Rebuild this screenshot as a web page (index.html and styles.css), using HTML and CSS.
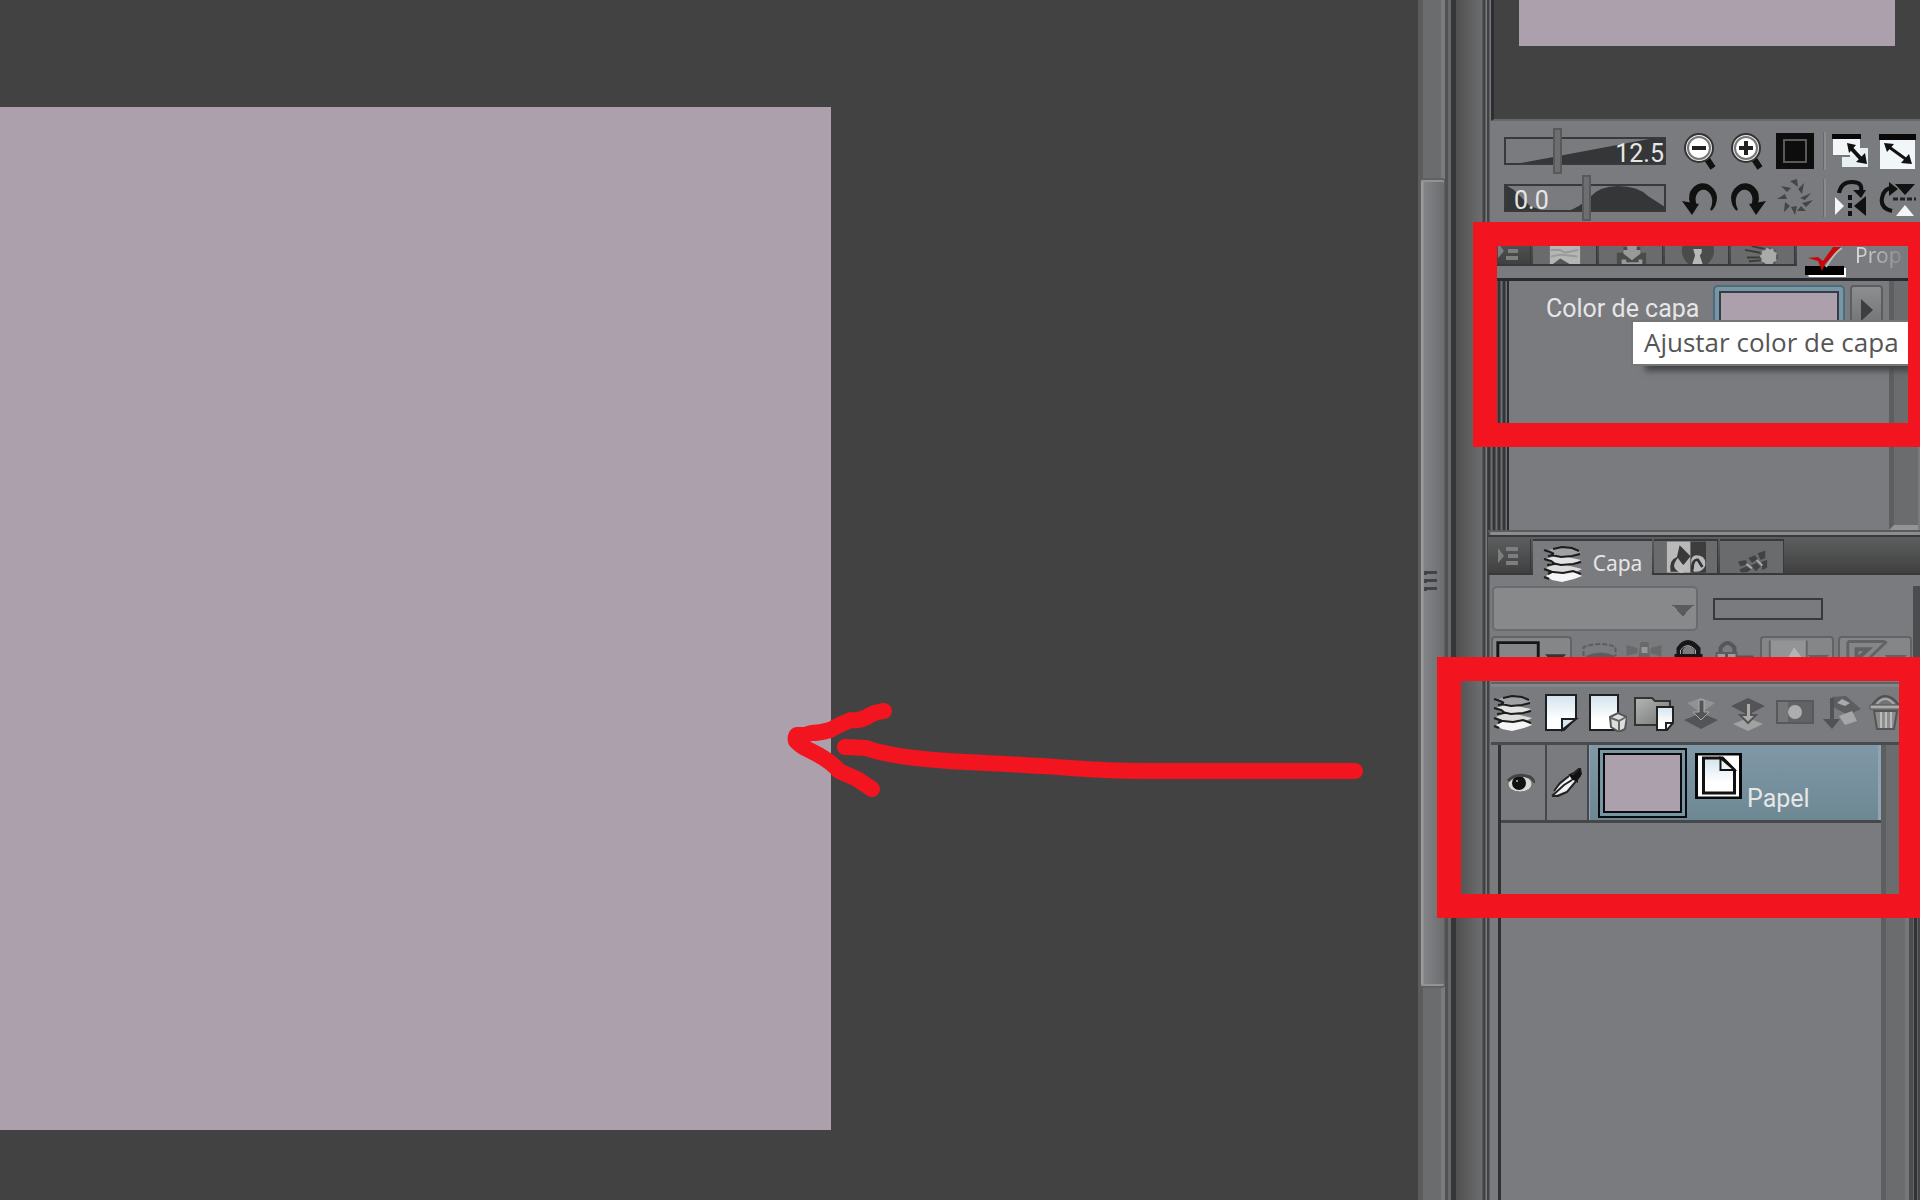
FILE: index.html
```html
<!DOCTYPE html>
<html lang="es">
<head>
<meta charset="utf-8">
<title>Color de capa</title>
<link rel="stylesheet" href="styles.css">
</head>
<body>
<svg class="defs" aria-hidden="true">
  <defs>
    <linearGradient id="sheet" x1="0" y1="0" x2="0" y2="1"><stop offset="0" stop-color="#d3e4ee"/><stop offset=".7" stop-color="#fff"/></linearGradient>
    <linearGradient id="folder" x1="0" y1="0" x2="1" y2="1"><stop offset="0" stop-color="#b4b6b5"/><stop offset="1" stop-color="#747674"/></linearGradient>
    <symbol id="layers" viewBox="0 0 40 38">
      <path d="M3 31l10-5 15-1 11 6-8 3-12 3-10-2z" fill="#f6f6f6"/>
      <path d="M3 23l12-5 24 6-8 4-12 1-10-3z" fill="#dcdcdc"/>
      <path d="M3 14l12-4 23 5-8 4-12 1-10-3z" fill="#e2e2e2"/>
      <path d="M2 6l13-4 12 1 11 4-8 4-12 1-10-3z" fill="#a0a1a2"/>
      <path d="M10 4l9-2 10 1 7 3M1 5l6 2 4 2M8 10l10 2 11-1 8-2M1 14l7 2 3 2M9 18l9 2 12-1 8-2M1 24l8 3-4 2M10 27l10 1 10-2 8 3M1 32l5 2M4 20l7-1M5 11l6-1" fill="none" stroke="#1c1c1c" stroke-width="2"/>
    </symbol>
    <symbol id="menu" viewBox="0 0 24 22"><path d="M1 3v15l6-7z"/><path d="M9 2h12v4H9zM11 9h10v4H11zM9 16h12v4H9z"/></symbol>
    <symbol id="turn" viewBox="0 0 38 38"><path d="M9 24C5 11 16 3 25 6q8 4 9 12 0 8-5 13 4-8 1-15-5-9-13-5-6 5-4 13z" fill="#111" stroke="#111" stroke-width="2"/><path d="M0 22l17 3-7 11z" fill="#111"/></symbol>
  </defs>
</svg>

<main class="app">
  <section class="workspace">
    <div class="paper"></div>
    <svg class="arrow" viewBox="0 0 600 120" aria-hidden="true">
      <path d="M575 71H366Q330 71 290 68T168 61Q110 57 86 48L65 47M104 11Q94 12 87 17Q80 21 71 20Q60 24 50 30Q40 33 31 33L25 35H17Q15 37 16 41Q22 47 29 50Q50 60 59 71L77 79 92 89"/>
    </svg>
  </section>

  <div class="scrollbar"><div class="thumb"><i></i><i></i><i></i></div></div>
  <div class="gutter"></div>

  <aside class="dock">
    <section class="navigator"><div class="preview"></div></section>

    <section class="controls">
      <div class="control-row">
        <label class="slider">
          <svg viewBox="0 0 162 28" aria-hidden="true"><path class="fill" d="M12 27L145 2h17v26H12z"/><rect x="1" y="1" width="160" height="26"/></svg>
          <span class="value right">12.5</span>
          <input type="range" min="0" max="100" value="32" aria-label="Zoom">
        </label>
        <div class="tools">
          <button aria-label="Alejar"><svg viewBox="0 0 38 38"><path d="M23 24l8 12" stroke="#111" stroke-width="6"/><circle cx="17" cy="16" r="15" fill="#333"/><circle cx="17" cy="16" r="12" fill="#fff" stroke="#eee" stroke-width="2"/><circle cx="17" cy="16" r="11" fill="none" stroke="#777" stroke-width="2"/><path d="M10 16h14" stroke="#222" stroke-width="4"/></svg></button>
          <button aria-label="Acercar"><svg viewBox="0 0 38 38"><path d="M23 24l8 12" stroke="#111" stroke-width="6"/><circle cx="17" cy="16" r="15" fill="#333"/><circle cx="17" cy="16" r="12" fill="#fff" stroke="#eee" stroke-width="2"/><circle cx="17" cy="16" r="11" fill="none" stroke="#777" stroke-width="2"/><path d="M10 16h14M17 9v14" stroke="#222" stroke-width="4"/></svg></button>
          <button aria-label="Ajustar"><svg viewBox="0 0 38 38"><path d="M0 1h38v36H0z" fill="#0d0d0d"/><path d="M8 8h22v22H8z" fill="none" stroke="#5a5a5a" stroke-width="2"/></svg></button>
          <span class="divider"></span>
          <button aria-label="Ajustar a ventana"><svg viewBox="0 0 38 38"><path d="M10 16h26v19H10z" fill="#e6eff1"/><path d="M1 4h27v20H1z" fill="#f2f6f7"/><path d="M0 2h29v5H0z" fill="#080808"/><path d="M1 24h17" stroke="#777" stroke-width="2"/><path d="M18 15l13 14" stroke="#111" stroke-width="4"/><path d="M15 11l9 2-7 8zM35 32l-2-11-9 9z" fill="#111"/></svg></button>
          <button aria-label="Ver completo"><svg viewBox="0 0 38 38"><path d="M1 3h35v34H1z" fill="#f1f7f8"/><path d="M0 2h37v6H0z" fill="#080808"/><path d="M10 15l18 13" stroke="#111" stroke-width="3"/><path d="M5 11l10 1-7 8zM33 32l-3-10-8 9z" fill="#111"/></svg></button>
        </div>
      </div>
      <div class="control-row">
        <label class="slider">
          <svg viewBox="0 0 162 28" aria-hidden="true"><path class="fill" d="M0 0l10 6 16 16 14 5H0zM64 27q12-4 22-14 10-11 28-11 20 0 30 10l17 11v4z"/><rect x="1" y="1" width="160" height="26"/></svg>
          <span class="value">0.0</span>
          <input type="range" min="0" max="100" value="51" aria-label="Rotación">
        </label>
        <div class="tools">
          <button aria-label="Girar a la izquierda"><svg><use href="#turn"/></svg></button>
          <button aria-label="Girar a la derecha"><svg viewBox="0 0 38 38"><use href="#turn" transform="matrix(-1 0 0 1 37 0)" width="38" height="38"/></svg></button>
          <button aria-label="Restablecer giro"><svg viewBox="0 0 38 38"><g fill="#444545"><path d="M14 2l7-2 1 8zM28 4l-2 11-4-5zM35 14l-6 7-5-2zM37 21l-7 7-4-4zM30 32l-9 0 4-5zM19 36l-4-8 6-1zM8 33l1-10 5 4zM1 20l8-5 2 5zM5 7l10 2-4 4z"/></g></svg></button>
          <span class="divider"></span>
          <button aria-label="Voltear horizontal"><svg viewBox="0 0 38 38"><path d="M7 14Q9 3 20 3t9 9" fill="none" stroke="#111" stroke-width="4"/><path d="M21 11h13l-5 8z" fill="#111"/><path d="M18 16v21" stroke="#111" stroke-width="4" stroke-dasharray="5 3"/><path d="M34 17v20L22 27z" fill="#111"/><path d="M3 18v18l9-9z" fill="#f1f7f7"/></svg></button>
          <button aria-label="Voltear vertical"><svg viewBox="0 0 38 38"><path d="M13 32Q1 29 3 19T13 9" fill="none" stroke="#111" stroke-width="4"/><path d="M10 3l9 7-9 7zM16 5h20L26 16z" fill="#111"/><path d="M14 20h23" stroke="#222" stroke-width="3" stroke-dasharray="5 2"/><path d="M26 26l9 11H17z" fill="#f1f7f7"/></svg></button>
        </div>
      </div>
    </section>

    <section class="property">
      <nav class="tabs">
        <button class="tab menu low" aria-label="Menú"><svg><use href="#menu"/></svg></button>
        <button class="tab" aria-label="Navegador"><svg viewBox="0 0 40 36"><path d="M4 0h32v34H4z" fill="#b5b5b5"/><path d="M5 19h10l5 3 14-3M5 26l10-2 18 2" stroke="#999" fill="none" stroke-width="2"/><path d="M7 34l8-6 10 6z" fill="#555"/></svg></button>
        <button class="tab" aria-label="Material"><svg viewBox="0 0 40 36"><path d="M5 22h7v-6h18v6h6v13H5z" fill="#4b4b4b"/><path d="M16 8h10v11h4v4l-9 7-9-7v-4h4z" fill="#999"/><path d="M10 29h5v3h13v-3h4v6H10z" fill="#999"/></svg></button>
        <button class="tab" aria-label="Información"><svg viewBox="0 0 40 36"><circle cx="21" cy="20" r="17" fill="#4b4b4c"/><path d="M16 18h9v4l-2 3 3 9H15l3-9z" fill="#b8b8b8"/></svg></button>
        <button class="tab" aria-label="Acciones"><svg viewBox="0 0 40 36"><path d="M1 19l16 3M3 27h15M8 15l14 3M5 31l13-1" stroke="#3c3c3c" stroke-width="2"/><circle cx="26" cy="26" r="9" fill="#aaa" stroke="#555" stroke-width="2" stroke-dasharray="3 3"/></svg></button>
        <button class="tab active prop"><svg viewBox="0 0 44 50"><path d="M0 36h41v9H4z" fill="#fff"/><path d="M0 34h39v9H0z"/><path d="M3 26l10-1 5 4 10-14h8L20 32l-3 7-4-10z" fill="#c80808"/><path d="M21 35Q30 20 37 16" fill="none" stroke="#b9b9b9" stroke-width="2"/></svg><span>Prop</span></button>
      </nav>
      <div class="property-body">
        <div class="grip"></div>
        <div class="property-form">
          <span class="property-label">Color de capa</span>
          <button class="swatch" aria-label="Color de capa"><i></i></button>
          <button class="more" aria-label="Más"><svg viewBox="0 0 29 40"><path d="M9 11v22l12-11z" fill="#3d3e3f"/></svg></button>
        </div>
        <div class="side-scroll"></div>
      </div>
      <div class="tooltip" role="tooltip">Ajustar color de capa</div>
      <div class="mark mark-property"></div>
    </section>

    <section class="layers">
      <nav class="tabs">
        <button class="tab menu" aria-label="Menú"><svg><use href="#menu"/></svg></button>
        <button class="tab active capa"><svg><use href="#layers"/></svg><span>Capa</span></button>
        <button class="tab" aria-label="Historial"><svg viewBox="0 0 44 36"><path d="M1 0h26v34H1z" fill="#b9b9b9"/><path d="M27 0h17v34H27z" fill="#3d3d3d"/><path d="M15 4l12 12-8 10-6-8q-9 11 2 15H5Q3 20 12 17z" fill="#393939"/><path d="M29 30q-4-14 4-15 12 0 10 12-4 7-12 6zM13 23q-5 10 5 12l7-7z" fill="#bbb"/><path d="M29 31q0-12 6-11l5 8" fill="none" stroke="#333" stroke-width="3"/></svg></button>
        <button class="tab" aria-label="Animación"><svg viewBox="0 0 40 36"><g fill="#424242"><path d="M5 22l8-2 3 4-8 3zM16 18l7-3 3 4-6 4zM26 13l8-3v8l-5 2zM7 30l7-3 5 3-4 3H8zM19 26l6-3 4 4-5 5zM30 22l6-2v8l-5 3z"/></g><path d="M14 24l6 5M25 20l6 6" stroke="#aaa" stroke-width="2"/></svg></button>
      </nav>

      <div class="blend-row">
        <select class="blend" aria-label="Modo de combinación" disabled><option></option></select>
        <div class="opacity"></div>
      </div>

      <div class="option-row">
        <button class="box palette" aria-label="Color de paleta"><svg viewBox="0 0 80 42"><path d="M5 4h42v34H5z" fill="none" stroke="#161616" stroke-width="3"/><path d="M54 16h22l-11 12z" fill="#333"/></svg></button>
        <button aria-label="Recortar"><svg viewBox="0 0 40 42"><path d="M3 20v-9q16-6 32 0v9" fill="none" stroke="#5c5d5e" stroke-width="2" stroke-dasharray="5 2"/><path d="M5 20q15-7 30 0l-7 8H12z" fill="#5c5d5e"/></svg></button>
        <button aria-label="Referencia"><svg viewBox="0 0 40 42"><path d="M15 6h8l2 22H12zM1 9l11 3v5L1 20zM36 9l-11 3v5l11 4z" fill="#68696a"/><path d="M16 11h6v6h-6z" fill="#989898"/></svg></button>
        <button aria-label="Bloquear"><svg viewBox="0 0 40 42"><path d="M9 20v-7q8-12 18 0v7" fill="none" stroke="#171717" stroke-width="6"/><path d="M10 19v-5q7-9 15 0v5" fill="none" stroke="#aaa" stroke-width="1"/><path d="M4 18h28v20H4z" fill="#161616"/></svg></button>
        <button aria-label="Bloquear píxeles"><svg viewBox="0 0 40 42"><path d="M5 17v-5q7-10 14 0v5" fill="none" stroke="#565758" stroke-width="4"/><path d="M1 17h20v20H1z" fill="#9b9c9d" stroke="#5b5c5d" stroke-width="2"/><path d="M11 18v8M21 21h17" stroke="#555" stroke-width="3"/></svg></button>
        <button class="box" aria-label="Máscara"><svg viewBox="0 0 72 42"><path d="M8 2h38v38H8z" fill="#939495"/><path d="M13 28l5-9 8 2 7-12 9 12v18H13z" fill="#b3b4b4"/><path d="M8 2v38M46 2v38" stroke="#666" stroke-width="2"/><path d="M47 17h22l-11 11z" fill="#606162"/></svg></button>
        <button class="box" aria-label="Regla"><svg viewBox="0 0 72 42"><path d="M8 3h38M8 3v35M48 3L22 28" fill="none" stroke="#626364" stroke-width="3"/><path d="M17 22v-11h12z" fill="none" stroke="#606162" stroke-width="4"/><path d="M46 17h23l-12 11z" fill="#606162"/></svg></button>
      </div>

      <div class="toolbar">
        <button aria-label="Capas"><svg><use href="#layers"/></svg></button>
        <button aria-label="Nueva capa"><svg viewBox="0 0 40 38"><path d="M6 1h30v23L24 36H6z" fill="url(#sheet)" stroke="#1d2022" stroke-width="2"/><path d="M22 36V25h14z" fill="#d8e7ed" stroke="#1d2022" stroke-width="2"/></svg></button>
        <button aria-label="Nueva capa 3D"><svg viewBox="0 0 40 38"><path d="M3 1h28v35H3z" fill="url(#sheet)" stroke="#1d2022" stroke-width="2"/><path d="M23 23l8-4 9 4-2 12-6 3-8-5z" fill="#ddd" stroke="#555" stroke-width="2"/><path d="M24 24l8 3v10M32 27l7-4" fill="none" stroke="#666" stroke-width="2"/></svg></button>
        <button aria-label="Nueva carpeta"><svg viewBox="0 0 40 38"><path d="M1 4h17l3 3h15v24H1z" fill="url(#folder)" stroke="#333" stroke-width="2"/><path d="M23 13h16v16l-6 7H23z" fill="url(#sheet)" stroke="#222" stroke-width="2"/><path d="M32 35v-6h7" fill="none" stroke="#222" stroke-width="2"/></svg></button>
        <button aria-label="Transferir"><svg viewBox="0 0 40 38"><path d="M3 26l17-7 17 7-17 9z" fill="#535455"/><path d="M6 9l14-5 14 5-14 10z" fill="#919293"/><path d="M18 6h5v12h5l-8 8-8-8h6z" fill="#545556" stroke="#aaa" stroke-width="1"/></svg></button>
        <button aria-label="Combinar"><svg viewBox="0 0 40 38"><path d="M3 12l17-8 17 8-17 9z" fill="#535455"/><path d="M5 30l15-6 15 6-15 7z" fill="#a0a1a1"/><path d="M18 9h5v12h5l-8 8-8-8h6z" fill="#aaa" stroke="#555" stroke-width="2"/></svg></button>
        <button aria-label="Crear máscara"><svg viewBox="0 0 40 38"><path d="M2 7h36v22H2z" fill="#626364" stroke="#57595a" stroke-width="2"/><path d="M3 8h10v20H3z" fill="#757677"/><circle cx="20" cy="18" r="7" fill="#adadad"/></svg></button>
        <button aria-label="Aplicar máscara"><svg viewBox="0 0 40 38"><path d="M10 3l14-1 15 13-13 6-15-8z" fill="#5d5e5f"/><path d="M17 22l13-5 5 10-12 4z" fill="#a5a6a6"/><path d="M20 5l8 4-5 3-8-3z" fill="#a9aaaa"/><path d="M8 4h4v21h6l-8 10-9-10h7z" fill="#515253"/></svg></button>
        <button aria-label="Eliminar"><svg viewBox="0 0 40 38"><path d="M3 11Q16-7 30 11" fill="#727374" stroke="#4e4f50" stroke-width="2"/><path d="M8 10Q16 0 25 10" fill="none" stroke="#aaa" stroke-width="2"/><path d="M1 11h31v4H1z" fill="#aaa" stroke="#555"/><path d="M5 17h23l-3 18H8z" fill="#8b8c8c" stroke="#555" stroke-width="2"/><path d="M12 18v16M17 18v16M22 18v16" stroke="#bbb" stroke-width="2"/></svg></button>
      </div>

      <div class="layer-area">
        <ul class="layer-list">
          <li class="layer">
            <button class="cell eye" aria-label="Visible"><svg viewBox="0 0 28 22"><ellipse cx="13" cy="12" rx="12" ry="8" fill="#d9d9d9" stroke="#777"/><circle cx="12" cy="11" r="7" fill="#111"/><path d="M1 9Q9 0 23 5q5 4 4 6" fill="none" stroke="#444" stroke-width="3"/><circle cx="10" cy="9" r="1" fill="#bbb"/></svg></button>
            <button class="cell pen" aria-label="Editar"><svg viewBox="0 0 32 30"><path d="M2 28q3-9 8-12l10-9 5 6-9 10z" fill="#f2f2f2"/><path d="M1 28h6l9-4 10-12M1 28l12-11 8-5M3 23l6-8 9-7M19 7l4-2 6-5 1 6-4 4 0 3z" fill="none" stroke="#222" stroke-width="2"/><path d="M18 6l4 1 7-6 1 7-4 5-5-1z" fill="#111"/></svg></button>
            <div class="selected">
              <span class="thumbnail"><i></i></span>
              <svg class="paper-icon" viewBox="0 0 46 46"><path d="M1 1h44v44H1z" fill="#fff" stroke="#080808" stroke-width="3"/><path d="M8 5h19l12 12v23H8z" fill="url(#sheet)" stroke="#111" stroke-width="3"/><path d="M25 5v12h14z" fill="#eef4f5" stroke="#111" stroke-width="2"/></svg>
              <span class="name">Papel</span>
            </div>
          </li>
        </ul>
        <div class="list-scroll"></div>
      </div>
      <div class="mark mark-layer"></div>
    </section>
  </aside>
</main>
</body>
</html>
```
FILE: styles.css
```css
:root {
  --panel: #7a7b7f;
  --dark: #424242;
  --line: #38393b;
  --lilac: #aca0ad;
  --red: #f2141e;
  --text: #e6e6e6;
}
* { box-sizing: border-box; }
body {
  margin: 0;
  overflow: hidden;
  background: var(--dark);
  color: var(--text);
  font-family: Roboto, sans-serif;
}
button {
  margin: 0;
  padding: 0;
  border: 0;
  background: none;
  color: inherit;
  font: inherit;
}
svg { display: block; }
.defs { position: absolute; width: 0; height: 0; }

.app {
  display: grid;
  grid-template-columns: minmax(0, 1fr) 27px 46px 429px;
  min-height: 100vh;
}

/* Canvas */
.workspace { position: relative; display: flex; padding: 107px 0 70px; }
.paper { width: 58.6%; background: var(--lilac); }
.arrow {
  position: absolute;
  top: 700px;
  left: 780px;
  width: 600px;
  height: 120px;
  fill: none;
  stroke: var(--red);
  stroke-width: 16;
  stroke-linecap: round;
  stroke-linejoin: round;
}

/* Canvas scrollbar and dock divider */
.scrollbar {
  padding: 178px 0 0 2px;
  background: linear-gradient(90deg, #5b5c5e 5px, #6b6c6e 5px 23px, #7b7c7e 23px);
}
.thumb {
  display: flex;
  flex-direction: column;
  gap: 4px;
  width: 25px;
  height: 810px;
  padding: 391px 0 0 3px;
  border: 1px solid #606163;
  border-width: 2px 1px;
  border-radius: 3px;
  background: linear-gradient(90deg, #9a9b9d 2px, #828386 3px, #6c6d6f);
  box-shadow: inset 0 2px #929395, inset 0 -2px #929395;
}
.thumb i { width: 13px; height: 4px; border-top: 3px solid #424346; border-left: 3px solid #424346; }
.gutter {
  background: linear-gradient(90deg, #505254 3px, #68696b 3px 6px, #363636 6px 11px, #505050 11px, #6c6d6f 37px, #424345 38px 40px, #7a7b7e 41px 42px, #424345 42px 44px, #7a7b7e 45px);
}

/* Dock */
.dock { display: flex; flex-direction: column; background: var(--panel); }
.navigator {
  height: 121px;
  padding: 0 25px;
  border-left: 3px solid #2d2e30;
  border-bottom: 2px solid #67686a;
  background: var(--dark);
}
.preview { height: 46px; background: var(--lilac); }

.controls { display: grid; gap: 1px; padding: 7px 0 5px 13px; }
.control-row { display: flex; align-items: center; gap: 16px; height: 46px; }
.slider { display: grid; width: 162px; align-items: center; }
.slider > * { grid-area: 1 / 1; }
.slider svg { width: 162px; height: 28px; }
.slider rect { fill: none; stroke: var(--line); stroke-width: 2; }
.fill { fill: #353638; }
.slider input {
  width: 162px;
  height: 46px;
  margin: 0;
  appearance: none;
  background: none;
}
.slider input::-webkit-slider-thumb {
  width: 9px;
  height: 46px;
  appearance: none;
  border: 2px solid #58595b;
  background: #6d6e70;
}
.value { padding: 6px 2px 0 10px; font-size: 25px; line-height: 28px; }
.right { text-align: right; }
.tools { display: flex; gap: 9px; }
.tools button, .tools svg { width: 38px; height: 38px; }
.divider { width: 3px; margin-right: -3px; background: #8a8b8d; border-left: 1px solid #69696b; }

/* Tabs */
.tabs {
  display: flex;
  gap: 2px;
  height: 40px;
  margin-left: -3px;
  border: 2px solid var(--line);
  border-width: 2px 0;
  background: linear-gradient(#5d5e5f, #404040);
}
.tab {
  display: flex;
  justify-content: center;
  width: 64px;
  height: 36px;
  margin-top: 2px;
  border-top: 2px solid var(--line);
  border-right: 1px solid #38393b;
  background: #6a6b6d;
  overflow: hidden;
}
.tab:not(.active) { height: 34px; }
.tab svg { flex: none; width: 40px; height: 34px; }
.tab.menu { width: 43px; padding-top: 6px; border-top: 0; background: none; fill: #7d7e80; }
.tab.menu svg { width: 24px; height: 22px; }
.tab.low { padding-top: 10px; }
.active {
  gap: 10px;
  height: 48px;
  border-right: 0;
  background: var(--panel);
  font: 21px/26px "Noto Sans", sans-serif;
}
.tab.capa { width: 119px; padding-top: 4px; }
.capa span { padding-top: 5px; }
.tab.capa svg { height: 38px; }
.tab.prop { flex: 1; justify-content: flex-start; gap: 6px; padding-left: 8px; }
.tab.prop svg { width: 44px; height: 50px; }
.prop span { padding-top: 10px; background: linear-gradient(90deg, #ddd, #8a8b8e); background-clip: text; color: transparent; }

/* Layer property */
.property { position: relative; height: 309px; border-bottom: 3px solid #8c8d90; }
.property-body {
  display: flex;
  height: 254px;
  margin-top: 12px;
  margin-left: -3px;
  border-top: 3px solid #292a2d;
  border-bottom: 2px solid #5a5b5d;
}
.grip { flex: none; width: 21px; background: repeating-linear-gradient(90deg, #343537 0 2px, #6e6f72 3px 4px, #343537 5px); border-right: 2px solid #2b2c2e; }
.property-form { display: flex; flex: 1; gap: 5px; min-width: 0; padding: 4px 6px 0 37px; }
.property-label { flex: 1; padding-top: 8px; font-size: 25px; line-height: 32px; white-space: nowrap; }
.swatch {
  flex: none;
  width: 132px;
  height: 46px;
  padding: 4px;
  border: 2px solid #4d6b7a;
  border-radius: 5px;
  background: #7896a6;
}
.swatch i { display: block; height: 34px; border: 2px solid #343c45; background: var(--lilac); }
.more { flex: none; width: 33px; height: 46px; border: 2px solid #5c5d5f; border-radius: 4px; background: linear-gradient(#8d8e90, #707173); }
.side-scroll { flex: none; width: 29px; margin-right: 2px; border-left: 5px solid #5d5e60; border-bottom: 5px solid #939496; background: #6b6c6e; }
.tooltip {
  position: absolute;
  top: 94px;
  right: 0;
  width: 289px;
  height: 46px;
  padding-left: 11px;
  border: 2px solid #767676;
  border-right: 0;
  background: #fff;
  box-shadow: 12px 7px 6px -2px #444547;
  color: #555;
  font: 26px/40px "Open Sans", sans-serif;
  white-space: nowrap;
}

/* Red marks drawn over the panels */
.mark { position: absolute; right: 0; border: 24px solid var(--red); pointer-events: none; }
.mark-property { top: -4px; left: -18px; height: 225px; border-right-width: 12px; }
.mark-layer { top: 122px; left: -54px; height: 261px; border-right-width: 21px; }

/* Layers */
.layers { position: relative; display: flex; flex: 1; flex-direction: column; }
.blend-row { display: flex; align-items: center; gap: 15px; margin-top: 11px; padding-left: 1px; border-right: 7px solid #4b4c4e; }
.blend {
  width: 206px;
  height: 45px;
  appearance: none;
  border: 2px solid #6a6b6d;
  border-radius: 5px;
  background: linear-gradient(to bottom left, transparent 50%, #5a5b5d 50%) 178px 17px / 11px 11px no-repeat, #88898b;
  background: linear-gradient(to bottom left, #5a5b5d 50%, transparent 50%) 178px 17px / 11px 11px no-repeat, linear-gradient(to bottom right, #5a5b5d 50%, transparent 50%) 189px 17px / 11px 11px no-repeat, #88898b;
  opacity: 1;
}
.opacity { width: 110px; height: 22px; border: 2px solid var(--line); }
.option-row { display: flex; gap: 4px; height: 51px; padding-top: 5px; border-right: 7px solid #4b4c4e; }
.option-row button { width: 41px; height: 42px; }
.option-row .box { width: 74px; border: 2px solid #626365; border-radius: 4px; background: #858688; }
.option-row .palette { width: 81px; margin-right: 4px; }
.option-row svg { width: 100%; height: 42px; }
.toolbar {
  display: flex;
  gap: 7px;
  height: 63px;
  padding: 12px 0 0 2px;
  border-bottom: 3px solid #4a4b4d;
  background: linear-gradient(#606163 2px, #858689 2px 5px, transparent 5px);
}
.toolbar button { flex: none; width: 40px; height: 38px; }
.toolbar svg { width: 40px; height: 38px; }
.layer-area { display: flex; flex: 1; padding-left: 7px; }
.layer-list { flex: 1; margin: 0; padding: 0; border-left: 3px solid #303133; list-style: none; }
.layer { display: flex; height: 78px; border-bottom: 3px solid #46474a; }
.cell { display: flex; align-items: center; justify-content: center; border-right: 2px solid #46474a; }
.eye { width: 46px; padding-right: 5px; }
.eye svg { width: 28px; height: 22px; }
.pen { width: 42px; }
.pen svg { width: 32px; height: 30px; }
.selected {
  display: flex;
  flex: 1;
  gap: 8px;
  padding: 3px 0 0 8px;
  border: solid #8fa5b3;
  border-width: 0 3px 0 1px;
  background: linear-gradient(#8199a7, #6d8793);
}
.thumbnail { width: 89px; height: 70px; padding: 3px; border: 2px solid #090b0d; background: #7895a3; }
.thumbnail i { display: block; height: 60px; border: 2px solid #090b0d; background: var(--lilac); }
.paper-icon { width: 47px; height: 46px; margin-top: 5px; }
.name { margin-left: -3px; padding-top: 34px; font-size: 25px; line-height: 34px; }
.list-scroll {
  width: 39px;
  background: linear-gradient(90deg, #5d5e60 5px, #6b6c6e 5px 24px, #77787a 24px 28px, #4c4d4f 28px 32px, #626365 32px 33px, #323335 33px 36px, #606163 36px 37px, #454648 37px);
}
```
